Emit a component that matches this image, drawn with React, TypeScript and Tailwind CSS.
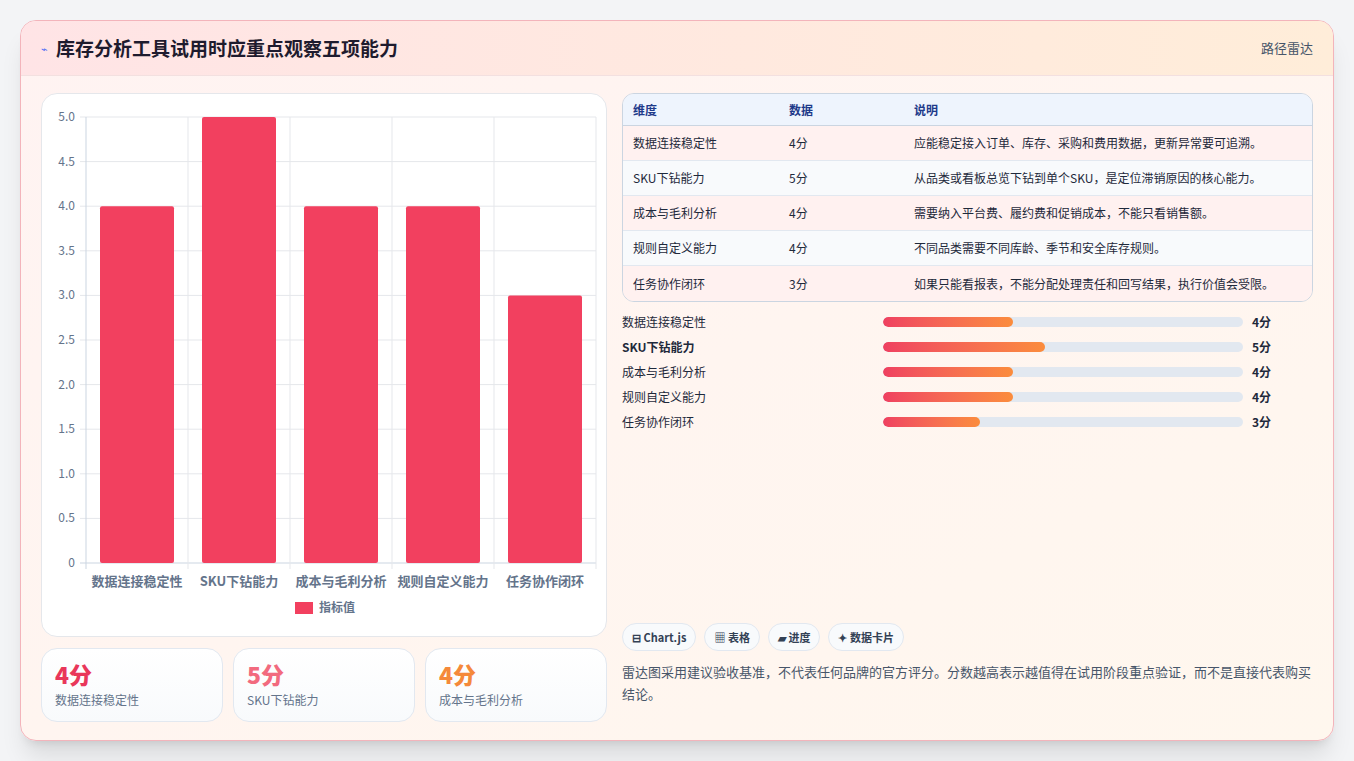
const font = { fontFamily: '"Noto Sans CJK SC", "Noto Sans", sans-serif' };

const rows = [
  { name: "数据连接稳定性", score: 4, note: "应能稳定接入订单、库存、采购和费用数据，更新异常要可追溯。" },
  { name: "SKU下钻能力", score: 5, note: "从品类或看板总览下钻到单个SKU，是定位滞销原因的核心能力。" },
  { name: "成本与毛利分析", score: 4, note: "需要纳入平台费、履约费和促销成本，不能只看销售额。" },
  { name: "规则自定义能力", score: 4, note: "不同品类需要不同库龄、季节和安全库存规则。" },
  { name: "任务协作闭环", score: 3, note: "如果只能看报表，不能分配处理责任和回写结果，执行价值会受限。" },
];

function Chart() {
  const x0 = 44;
  const top = 23;
  const bottom = 469;
  const unit = (bottom - top) / 5;
  const ticks = [0, 0.5, 1, 1.5, 2, 2.5, 3, 3.5, 4, 4.5, 5];
  return (
    <svg width="566" height="543" style={font}>
      {ticks.map((t) => {
        const y = bottom - t * unit;
        return (
          <g key={t}>
            <line x1={x0 - 6} x2={554} y1={y} y2={y} stroke={t === 0 ? "#cbd5e1" : "#e5e7eb"} />
            <text x={33} y={y + 4} textAnchor="end" fontSize="12" fill="#64748b">
              {t === 0 ? "0" : t.toFixed(1)}
            </text>
          </g>
        );
      })}
      {[0, 1, 2, 3, 4, 5].map((i) => (
        <line key={i} x1={x0 + i * 102} x2={x0 + i * 102} y1={top} y2={bottom + 6} stroke={i === 0 ? "#cbd5e1" : "#e5e7eb"} />
      ))}
      {rows.map((r, i) => (
        <g key={r.name}>
          <rect x={x0 + 14 + i * 102} y={bottom - r.score * unit} width={74} height={r.score * unit} rx={2} fill="#f2405f" />
          <text x={x0 + 51 + i * 102} y={492} textAnchor="middle" fontSize="13" fontWeight="600" fill="#64748b">
            {r.name}
          </text>
        </g>
      ))}
      <rect x={253} y={508} width={18} height={12} fill="#f2405f" />
      <text x={277} y={518} fontSize="12" fontWeight="600" fill="#64748b">指标值</text>
    </svg>
  );
}

export default function App() {
  const cardColors = ["text-[#e9375a]", "text-[#f26a7e]", "text-[#f5893a]"];
  return (
    <div className="min-h-screen bg-[#f3f4f6] p-5" style={font}>
      <div className="w-[1314px] h-[721px] flex flex-col rounded-2xl border border-[#f3b4bb] bg-gradient-to-br from-[#fff3f2] to-[#fff7ee] shadow-xl overflow-hidden">
        <div className="h-[55px] flex items-center justify-between px-5 border-b border-[#f3e0e0] bg-gradient-to-r from-[#ffe4e6] to-[#ffedd9]">
          <div className="flex items-center gap-2">
            <span className="text-[#4f6df5] text-[11px]">⌁</span>
            <h1 className="text-[19px] font-bold text-[#1e1b2e]">库存分析工具试用时应重点观察五项能力</h1>
          </div>
          <span className="text-[13px] text-[#475569]">路径雷达</span>
        </div>
        <div className="flex gap-[15px] px-5 pt-[17px]">
          <div className="w-[566px] flex flex-col gap-[11px]">
            <div className="h-[544px] rounded-2xl bg-white border border-[#e5e7eb]">
              <Chart />
            </div>
            <div className="flex gap-[10px]">
              {rows.slice(0, 3).map((r, i) => (
                <div key={r.name} className="flex-1 h-[74px] rounded-2xl border border-[#e2e8f0] bg-gradient-to-b from-white to-[#f8fafc] px-[13px] pt-[10px]">
                  <div className={`text-[23px] font-extrabold leading-[30px] ${cardColors[i]}`}>{r.score}分</div>
                  <div className="text-[12px] text-[#64748b] mt-[2px]">{r.name}</div>
                </div>
              ))}
            </div>
          </div>
          <div className="flex-1 flex flex-col">
            <div className="rounded-xl border border-[#cbd5e1] overflow-hidden text-[12px]">
              <div className="flex h-[32px] items-center bg-[#eef4fd] border-b border-[#cbd5e1] font-bold text-[#1e3a8a]">
                <div className="w-[166px] pl-[10px]">维度</div>
                <div className="w-[125px]">数据</div>
                <div className="flex-1">说明</div>
              </div>
              {rows.map((r, i) => (
                <div key={r.name} className={`flex h-[35px] items-center text-[#1e293b] ${i < 4 ? "border-b border-[#e2e8f0]" : ""} ${i % 2 === 0 ? "bg-[#fff1f0]" : "bg-[#f8fafc]"}`}>
                  <div className="w-[166px] pl-[10px]">{r.name}</div>
                  <div className="w-[125px]">{r.score}分</div>
                  <div className="flex-1">{r.note}</div>
                </div>
              ))}
            </div>
            <div className="flex flex-col gap-[7px] mt-[11px]">
              {rows.map((r, i) => (
                <div key={r.name} className="flex items-center h-[18px] text-[12px] text-[#1e293b]">
                  <div className={`w-[261px] ${i === 1 ? "font-bold" : ""}`}>{r.name}</div>
                  <div className="w-[360px] h-[10px] rounded-full bg-[#e2e8f0] overflow-hidden">
                    <div className="h-full rounded-full bg-gradient-to-r from-[#ef4060] to-[#fb8c3c]" style={{ width: `${r.score * 9}%` }} />
                  </div>
                  <div className="ml-[9px] font-bold">{r.score}分</div>
                </div>
              ))}
            </div>
            <div className="flex-1" />
            <div className="flex gap-[8px]">
              {["⊟ Chart.js", "▦ 表格", "▰ 进度", "✦ 数据卡片"].map((c) => (
                <span key={c} className="h-[28px] px-[9px] flex items-center rounded-full border border-[#e2e8f0] bg-[#f8fafc] text-[11px] font-bold text-[#334155]">
                  {c}
                </span>
              ))}
            </div>
            <p className="mt-[10px] text-[13px] leading-[22px] text-[#475569]">
              雷达图采用建议验收基准，不代表任何品牌的官方评分。分数越高表示越值得在试用阶段重点验证，而不是直接代表购买结论。
            </p>
            <div className="h-[17px]" />
          </div>
        </div>
      </div>
    </div>
  );
}
